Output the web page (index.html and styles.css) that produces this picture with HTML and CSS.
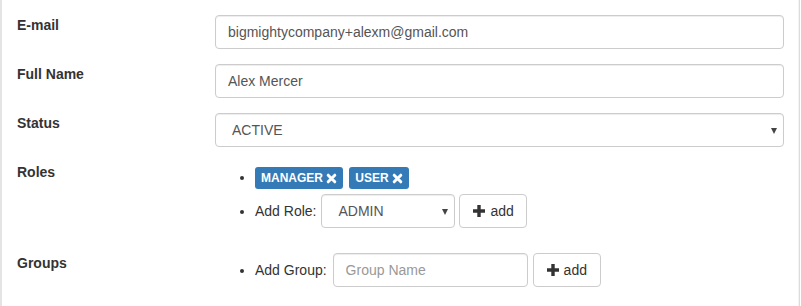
FILE: index.html
```html
<!DOCTYPE html>
<html lang="en">
<head>
    <meta charset="UTF-8">
    <meta name="viewport" content="width=device-width, initial-scale=1.0">
    <title>Edit User</title>
    <link rel="stylesheet" href="styles.css">
</head>
<body>
    <div id="page">
        <form class="user-form">
            <div class="form-row">
                <label class="row-label" for="email">E-mail</label>
                <input class="form-control" id="email" type="text" value="bigmightycompany+alexm@gmail.com">
            </div>

            <div class="form-row">
                <label class="row-label" for="full-name">Full Name</label>
                <input class="form-control" id="full-name" type="text" value="Alex Mercer">
            </div>

            <div class="form-row">
                <label class="row-label" for="status">Status</label>
                <div class="select-wrap">
                    <select class="form-control select-control" id="status">
                        <option>ACTIVE</option>
                        <option>INACTIVE</option>
                    </select>
                    <span class="caret"></span>
                </div>
            </div>

            <div class="form-row">
                <label class="row-label">Roles</label>
                <ul class="item-list">
                    <li class="tags-item">
                        <div class="inline-row">
                            <span class="tag">MANAGER <span class="tag-x"><svg viewBox="0 0 11 11" width="11" height="11"><path d="M2.2 2.2 L8.8 8.8 M8.8 2.2 L2.2 8.8" stroke="#fff" stroke-width="3" stroke-linecap="round"/></svg></span></span>
                            <span class="tag">USER <span class="tag-x"><svg viewBox="0 0 11 11" width="11" height="11"><path d="M2.2 2.2 L8.8 8.8 M8.8 2.2 L2.2 8.8" stroke="#fff" stroke-width="3" stroke-linecap="round"/></svg></span></span>
                        </div>
                    </li>
                    <li>
                        <div class="inline-row">
                            <span class="add-label">Add Role:</span>
                            <div class="select-wrap role-select">
                                <select class="form-control select-control">
                                    <option>ADMIN</option>
                                    <option>MANAGER</option>
                                    <option>USER</option>
                                </select>
                                <span class="caret"></span>
                            </div>
                            <button class="btn" type="button"><svg class="plus" viewBox="0 0 12 12" width="12" height="12"><path d="M4.3 0 H7.7 V4.3 H12 V7.7 H7.7 V12 H4.3 V7.7 H0 V4.3 H4.3 Z" fill="#333"/></svg>add</button>
                        </div>
                    </li>
                </ul>
            </div>

            <div class="form-row">
                <label class="row-label">Groups</label>
                <ul class="item-list">
                    <li>
                        <div class="inline-row">
                            <span class="add-label">Add Group:</span>
                            <input class="form-control group-input" type="text" placeholder="Group Name">
                            <button class="btn group-btn" type="button"><svg class="plus" viewBox="0 0 12 12" width="12" height="12"><path d="M4.3 0 H7.7 V4.3 H12 V7.7 H7.7 V12 H4.3 V7.7 H0 V4.3 H4.3 Z" fill="#333"/></svg>add</button>
                        </div>
                    </li>
                </ul>
            </div>
        </form>
    </div>
</body>
</html>
```

FILE: styles.css
```css
* {
    margin: 0;
    padding: 0;
    box-sizing: border-box;
}

body {
    font-family: "Liberation Sans", Arial, sans-serif;
    font-size: 14px;
    line-height: 20px;
    color: #333;
    background: #fff;
    overflow: hidden;
}

#page {
    width: 800px;
    height: 306px;
    border-left: 2px solid #e4e4e4;
    border-right: 1px solid #dcdcdc;
    box-shadow: inset -1px 0 0 #f3f3f3;
    padding: 15px 15px 0 15px;
}

.form-row {
    display: grid;
    grid-template-columns: 198px 1fr;
    margin-bottom: 15px;
}

.row-label {
    font-weight: bold;
}

.form-control {
    display: block;
    width: 100%;
    height: 34px;
    padding: 6px 12px;
    font-family: inherit;
    font-size: 14px;
    line-height: 20px;
    color: #555;
    background: #fff;
    border: 1px solid #ccc;
    border-radius: 4px;
    box-shadow: inset 0 1px 1px rgba(0, 0, 0, 0.075);
    outline: none;
}

.form-control::placeholder {
    color: #999;
}

.select-wrap {
    position: relative;
}

.select-control {
    appearance: none;
    -webkit-appearance: none;
    padding-left: 16px;
}

.caret {
    position: absolute;
    top: 15px;
    right: 7px;
    width: 0;
    height: 0;
    border-left: 3px solid transparent;
    border-right: 3px solid transparent;
    border-top: 6px solid #444;
    pointer-events: none;
}

/* roles / groups lists */
.item-list {
    padding-left: 40px;
    margin-bottom: 10px;
}

.tags-item {
    padding: 5px 0;
}

.inline-row {
    display: inline-flex;
    align-items: center;
}

.tag {
    display: inline-flex;
    align-items: center;
    height: 22px;
    padding: 0 6px;
    margin-right: 6px;
    font-size: 12px;
    font-weight: bold;
    line-height: 22px;
    color: #fff;
    background: #337ab7;
    border-radius: 3px;
    white-space: pre;
}

.tag-x {
    display: inline-flex;
}

.add-label {
    margin-right: 5px;
}

.role-select {
    width: 134px;
}

.group-input {
    width: 195px;
    margin-left: 1px;
}

.btn {
    display: inline-flex;
    align-items: center;
    height: 34px;
    margin-left: 4px;
    padding: 6px 12px 6px 13px;
    font-family: inherit;
    font-size: 14px;
    color: #333;
    background: #fff;
    border: 1px solid #ccc;
    border-radius: 4px;
    cursor: pointer;
}

.group-btn {
    margin-left: 5px;
    padding-right: 13px;
}

.plus {
    margin-right: 5px;
}
```
